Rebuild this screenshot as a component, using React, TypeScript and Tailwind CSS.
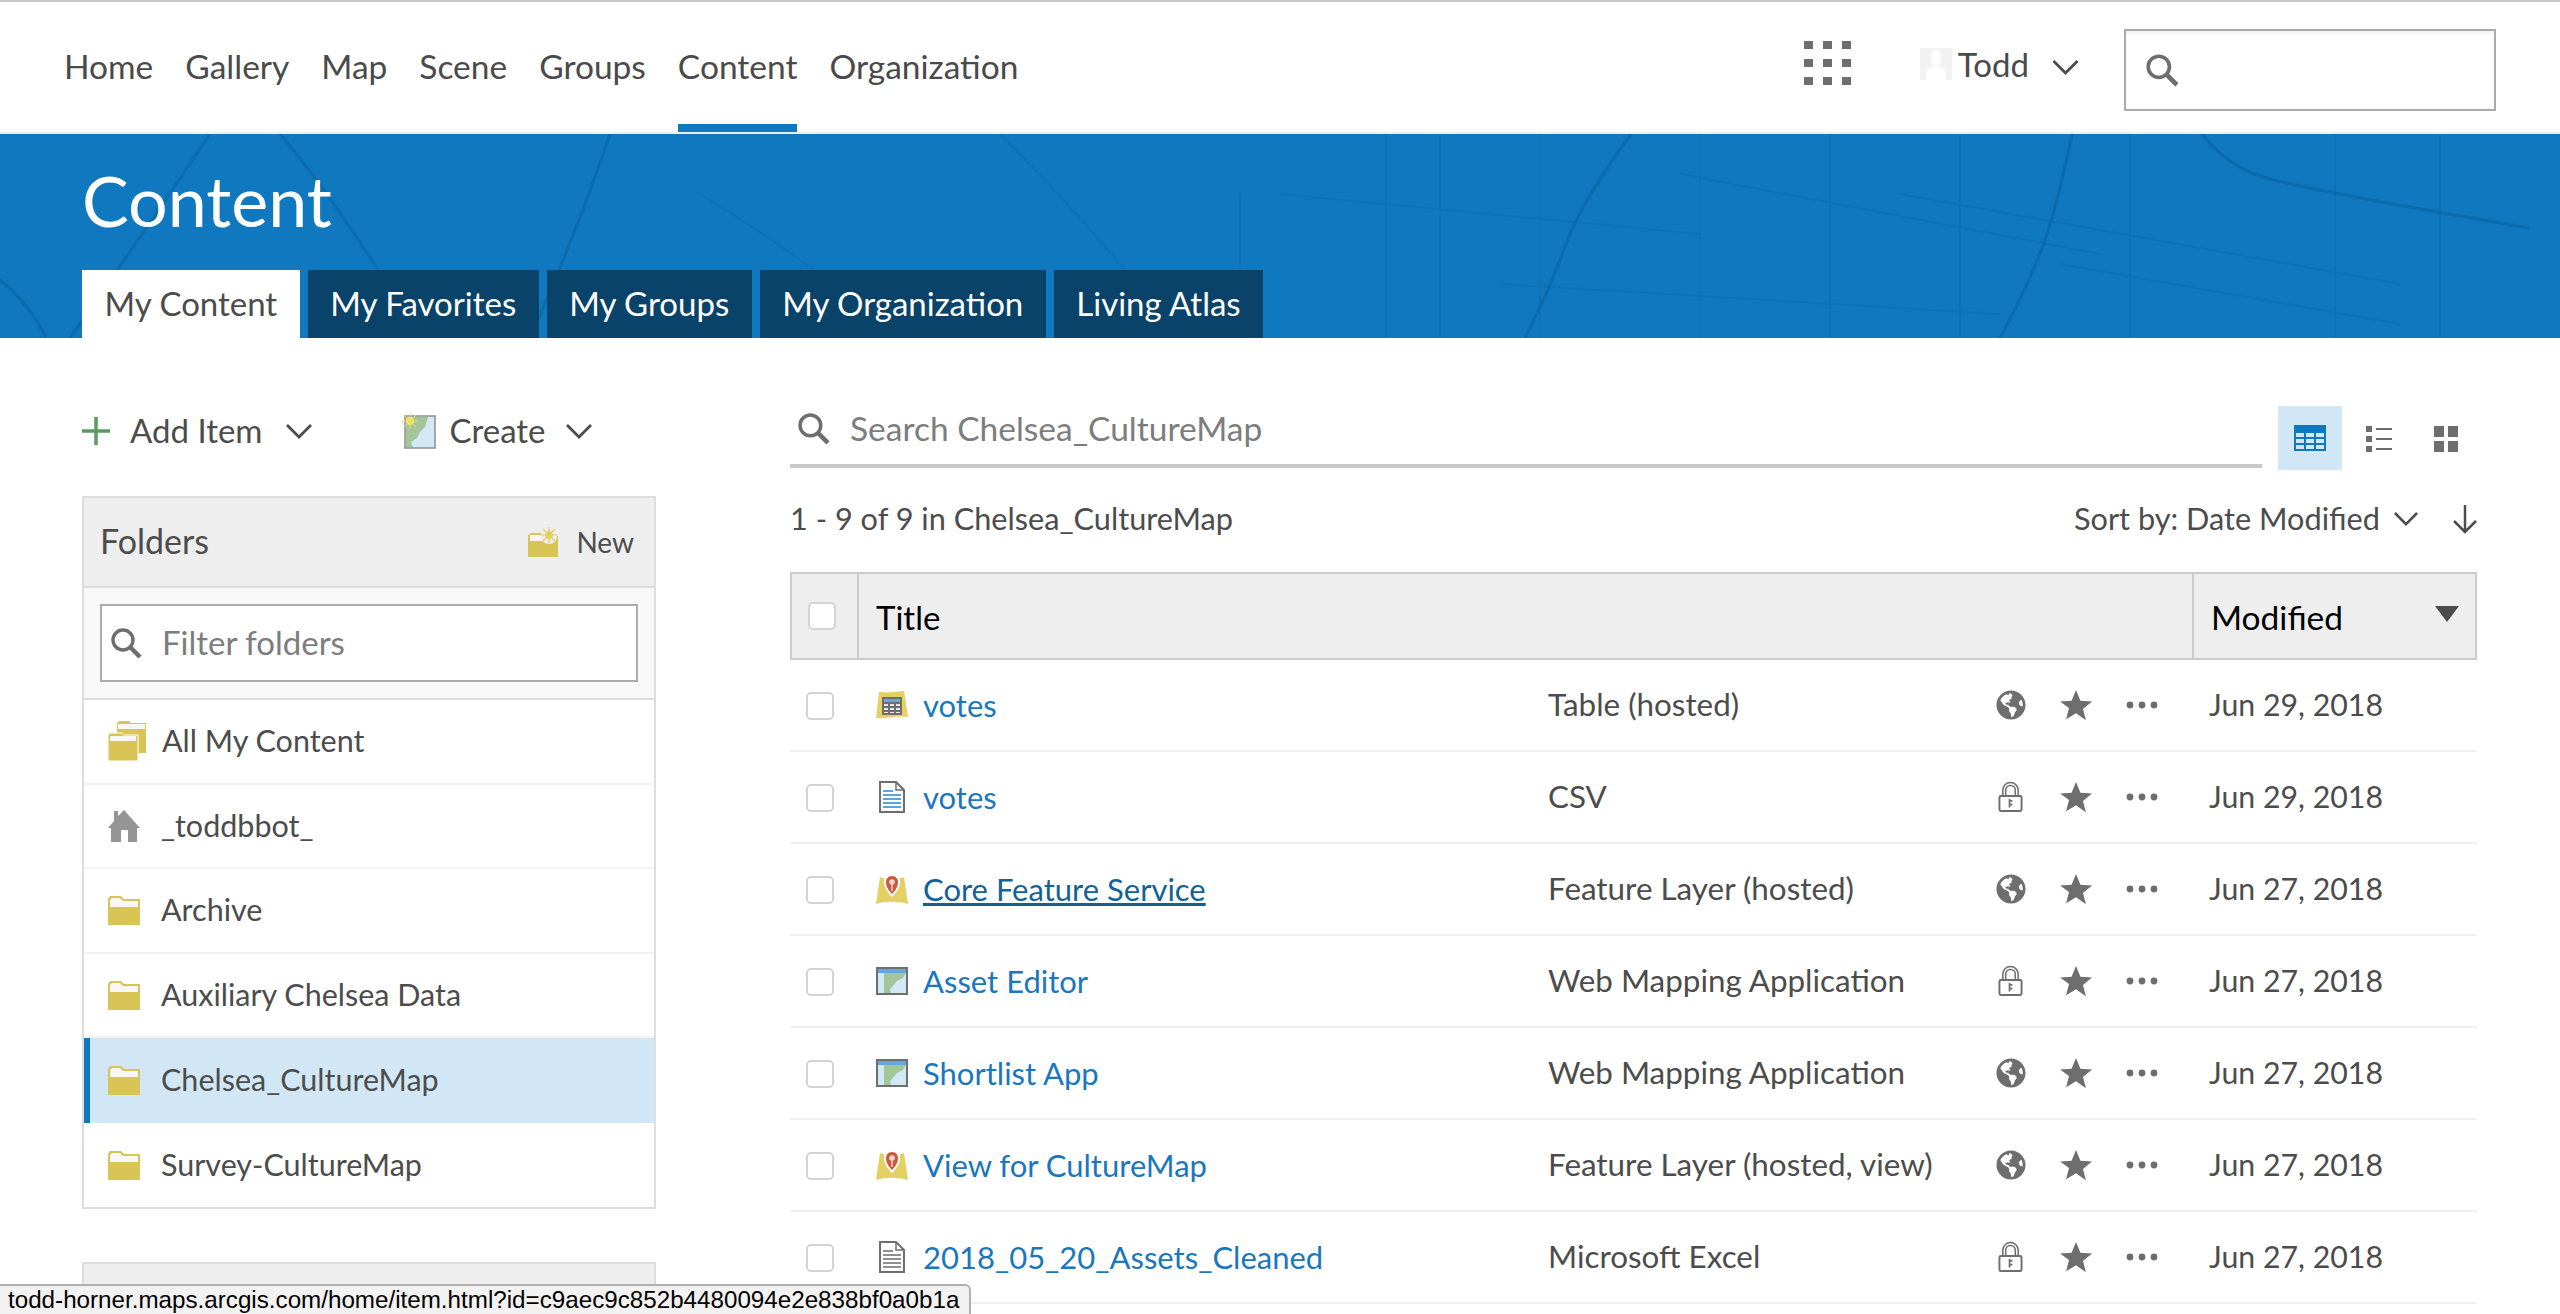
import { ReactNode } from 'react';
import { FaGlobeAmericas } from 'react-icons/fa';

const navLinks = ['Home', 'Gallery', 'Map', 'Scene', 'Groups', 'Content', 'Organization'];
const tabs = ['My Content', 'My Favorites', 'My Groups', 'My Organization', 'Living Atlas'];
const folders = ['Archive', 'Auxiliary Chelsea Data', 'Chelsea_CultureMap', 'Survey-CultureMap'];

type Row = {
  title: string;
  type: string;
  icon: 'table' | 'csv' | 'layer' | 'app' | 'excel';
  shared: boolean;
  date: string;
  hover?: boolean;
};

const rows: Row[] = [
  { title: 'votes', type: 'Table (hosted)', icon: 'table', shared: true, date: 'Jun 29, 2018' },
  { title: 'votes', type: 'CSV', icon: 'csv', shared: false, date: 'Jun 29, 2018' },
  { title: 'Core Feature Service', type: 'Feature Layer (hosted)', icon: 'layer', shared: true, date: 'Jun 27, 2018', hover: true },
  { title: 'Asset Editor', type: 'Web Mapping Application', icon: 'app', shared: false, date: 'Jun 27, 2018' },
  { title: 'Shortlist App', type: 'Web Mapping Application', icon: 'app', shared: true, date: 'Jun 27, 2018' },
  { title: 'View for CultureMap', type: 'Feature Layer (hosted, view)', icon: 'layer', shared: true, date: 'Jun 27, 2018' },
  { title: '2018_05_20_Assets_Cleaned', type: 'Microsoft Excel', icon: 'excel', shared: false, date: 'Jun 27, 2018' },
];

const SearchIcon = ({ className }: { className: string }) => (
  <svg viewBox="0 0 32 32" className={className} fill="none" stroke="#6e6e6e">
    <circle cx="13" cy="13" r="10" strokeWidth="3.4" />
    <path d="M20 20l10 10" strokeWidth="4.4" />
  </svg>
);

const Chevron = ({ className }: { className: string }) => (
  <svg viewBox="0 0 26 15" className={className} fill="none" stroke="#4c4c4c" strokeWidth="2.8">
    <path d="M1 1l12 12L25 1" />
  </svg>
);

const Folder = () => (
  <svg viewBox="0 0 32 30" className="w-8 h-[30px] shrink-0">
    <path d="M0 4l2-3h11l3 3h16v26H0z" fill="#d9c556" />
    <path d="M2 5l2-2h8l3 3h15v6H2z" fill="#f7f7f7" />
  </svg>
);

const FolderStack = () => (
  <svg viewBox="0 0 38 40" className="w-[38px] h-10 shrink-0">
    <path d="M9 2l2-2h10l2 2h15v30H9z" fill="#d9c556" />
    <path d="M10 3h27v5H10z" fill="#f7f7f7" />
    <path d="M0 14l2-2h12l2 2h14v26H0z" fill="#d9c556" stroke="#fff" strokeWidth="1" />
    <path d="M2 15h26v5H2z" fill="#f7f7f7" />
  </svg>
);

const NewFolder = () => (
  <svg viewBox="0 0 30 30" className="w-[30px] h-[30px]">
    <path d="M0 8l3-2h10l3 3h14v21H0z" fill="#d9c556" />
    <path d="M2 8h14l3 5h9v1H2z" fill="#f7f7f7" />
    <circle cx="21" cy="9" r="8" fill="#eee" />
    <circle cx="21" cy="8" r="4" fill="#e8d66c" />
    <path d="M21 0v16M13 8h16M15 2l12 12M27 2L15 14" stroke="#e0cd5c" strokeWidth="1.2" />
  </svg>
);

const HomeIcon = () => (
  <svg viewBox="0 0 32 32" className="w-8 h-8 shrink-0">
    <path d="M16 0l16 18h-3v14H20V20h-7v12H3V18H0L6 11V1h4v5z" fill="#959595" />
  </svg>
);

const MapThumb = () => (
  <svg viewBox="0 0 34 36" className="w-[34px] h-9 shrink-0">
    <path d="M3 3h30v32H3z" fill="#d3e8f5" stroke="#8f8f8f" strokeWidth="1.5" />
    <path d="M4 4h22l-3 10-5 5-3 6-6 4 2 5H4z" fill="#a2c59a" />
    <circle cx="8" cy="8" r="4" fill="#f5e67e" />
    <path d="M8 0v16M0 8h16M2 2l12 12M14 2L2 14" stroke="#ecd95d" strokeWidth="1" />
  </svg>
);

const TableThumb = () => (
  <svg viewBox="0 0 32 28" className="w-8 h-7">
    <path d="M3 1c8 1 14 0 25-1l4 26c-10-2-20 2-32 1z" fill="#e5d064" />
    <rect x="6" y="6" width="20" height="18" fill="#6e6e6e" />
    <path d="M8 8h16v3H8z" fill="#62a8dc" />
    <path d="M8 13h4v2H8zM14 13h4v2h-4zM20 13h4v2h-4zM8 17h4v2H8zM14 17h4v2h-4zM20 17h4v2h-4zM8 21h4v1H8zM14 21h4v1h-4zM20 21h4v1h-4z" fill="#e6e6e6" />
  </svg>
);

const LayerThumb = () => (
  <svg viewBox="0 0 32 31" className="w-8 h-[31px]">
    <path d="M4 3l6 2c4-1 8-1 12 0l6-2 4 27c-10-3-22-3-32 0z" fill="#e5d064" />
    <path d="M16 0c5 0 8 3 8 8 0 6-4 11-8 15-4-4-8-9-8-15 0-5 3-8 8-8z" fill="#fff" />
    <path d="M16 2c4 0 6 3 6 6 0 5-3 9-6 12-3-3-6-7-6-12 0-3 2-6 6-6z" fill="#c9593f" />
    <circle cx="16" cy="8" r="2.800" fill="#f5d6cc" />
    <path d="M16 10v7" stroke="#f5d6cc" strokeWidth="1.400" />
  </svg>
);

const AppThumb = () => (
  <svg viewBox="0 0 32 28" className="w-8 h-7">
    <rect x="1" y="1" width="30" height="26" fill="#d3e8f5" stroke="#6e6e6e" strokeWidth="2" />
    <path d="M2 2h28v4H2z" fill="#62a8dc" />
    <path d="M8 6h22l-3 5-6 3-4 5-3 3 1 4H8z" fill="#a2c59a" />
  </svg>
);

const DocThumb = ({ line }: { line: string }) => (
  <svg viewBox="0 0 26 32" className="w-[26px] h-8">
    <path d="M1 1h16l8 8v22H1z" fill="#fff" stroke="#6e6e6e" strokeWidth="2" />
    <path d="M17 1v8h8" fill="none" stroke="#6e6e6e" strokeWidth="1.5" />
    <path d="M4 9h10v2H4zM4 13h18v2H4zM4 17h18v2H4zM4 21h18v2H4zM4 25h18v2H4z" fill={line} />
  </svg>
);

const thumbs: Record<Row['icon'], ReactNode> = {
  table: <TableThumb />,
  csv: <DocThumb line="#5aa5dc" />,
  layer: <LayerThumb />,
  app: <AppThumb />,
  excel: <DocThumb line="#8f8f8f" />,
};

const LockIcon = () => (
  <svg viewBox="0 0 26 32" className="w-[25px] h-8" fill="none" stroke="#6e6e6e">
    <path d="M5 15V9a8 8 0 0116 0v6M8 15V9a5 5 0 0110 0v6" strokeWidth="1.6" />
    <rect x="1.5" y="15" width="23" height="15.5" rx="1.5" strokeWidth="2" />
    <path d="M12 18v9M12 20h3M12 24h3" strokeWidth="1.8" />
  </svg>
);

const StarIcon = () => (
  <svg viewBox="0 0 32 32" className="w-8 h-8">
    <path d="M16 1l4.4 10.8 11.6.8-9 7.4 2.9 11.3L16 24.2 6.100 30.300 9 19 0 12.600l11.600-.8z" fill="#6e6e6e" />
  </svg>
);

const Dots = () => (
  <svg viewBox="0 0 32 8" className="w-8 h-2">
    <circle cx="4" cy="4" r="3.400" fill="#6e6e6e" />
    <circle cx="16" cy="4" r="3.400" fill="#6e6e6e" />
    <circle cx="28" cy="4" r="3.400" fill="#6e6e6e" />
  </svg>
);

const Checkbox = () => (
  <span className="block w-7 h-7 rounded-[5px] border-2 border-[#d4d4d4] bg-white" />
);

const BannerLines = () => (
  <svg viewBox="0 0 2560 204" className="absolute inset-0 w-full h-full" fill="none" stroke="#0a5f9c">
    <g strokeWidth="3" opacity="0.5">
      <path d="M210 0Q150 90 70 204" />
      <path d="M0 146Q30 170 46 204" />
      <path d="M610 0Q580 90 530 204" />
      <path d="M280 0Q340 70 420 204" />
      <path d="M1631 0Q1580 70 1566 110T1525 204" />
      <path d="M2072 0Q2060 60 2047 100T2000 204" />
      <path d="M2202 0Q2225 30 2260 42T2530 94" />
    </g>
    <g strokeWidth="2" opacity="0.2">
      <path d="M1386 0V204M1440 0V204M1540 0V204M1700 0V204M1830 0V204M1960 0V204M2130 0V204M2335 0V204M2440 0V204" />
      <path d="M1280 60L1700 100M1680 40L2100 120M1900 60L2400 150M1500 150L2000 180M2060 130L2400 190" />
      <path d="M700 60Q800 120 900 204M1000 0Q1100 100 1180 204M1240 60V204" />
    </g>
  </svg>
);

export default function App() {
  return (
    <div className="relative h-[1314px] overflow-hidden bg-white font-['Lato','Liberation_Sans',sans-serif] text-[#4c4c4c]">
      <header className="flex h-[134px] items-center justify-between border-t-2 border-b-2 border-t-[#c8c8c8] border-b-[#eeeeee] pl-[64px] pr-[64px]">
        <nav className="flex h-full gap-[32px] text-[33.5px] text-[#4a4a4a]">
          {navLinks.map((link) => (
            <a
              key={link}
              className={`flex h-full items-center pt-[6px] border-b-[8px] ${link === 'Content' ? 'border-[#0f78bf]' : 'border-transparent'}`}
            >
              {link}
            </a>
          ))}
        </nav>
        <div className="flex items-center">
          <div className="mb-[8px] grid grid-cols-3 gap-x-[10px] gap-y-[10px]">
            {Array.from({ length: 9 }).map((_, i) => (
              <span key={i} className="w-[9px] h-[8px] bg-[#6e6e6e]" />
            ))}
          </div>
          <div className="ml-[69px] mb-[6px] w-8 h-8 bg-[#f2f2f2] flex items-center justify-center">
            <svg viewBox="0 0 32 32" className="w-8 h-8">
              <path d="M16 2c4 0 5 4 5 8s-2 7-3 8l8 5v9H6v-9l8-5c-1-1-3-4-3-8s1-8 5-8z" fill="#ffffff" />
            </svg>
          </div>
          <span className="ml-[6px] mb-[4px] text-[33px] text-[#4a4a4a]">Todd</span>
          <Chevron className="ml-[23px] w-[27px] h-[15px]" />
          <div className="ml-[45px] mt-[5px] flex h-[82px] w-[372px] items-center border-2 border-[#ababab] pl-[19px] shadow-[inset_0_2px_3px_rgba(0,0,0,0.06)]">
            <SearchIcon className="w-[34px] h-[34px]" />
          </div>
        </div>
      </header>

      <section className="relative h-[204px] bg-[#0f78bf] pl-[82px] overflow-hidden">
        <BannerLines />
        <div className="relative flex h-full flex-col justify-between">
          <h1 className="pt-[24px] text-[70px] leading-[84px] text-white">Content</h1>
          <div className="flex gap-[8px]">
            {tabs.map((tab, i) => (
              <a
                key={tab}
                className={`flex h-[68px] items-center px-[22.5px] text-[33px] ${i === 0 ? 'bg-white text-[#4c4c4c]' : 'bg-[#0a4369] text-white'}`}
              >
                {tab}
              </a>
            ))}
          </div>
        </div>
      </section>

      <main className="flex gap-[134px] pl-[82px] pr-[83px]">
        <aside className="w-[574px] shrink-0">
          <div className="flex h-[158px] items-center pt-[28px] text-[33px]">
            <svg viewBox="0 0 28 28" className="w-7 h-7">
              <path d="M14 0v28M0 14h28" stroke="#5a9a62" strokeWidth="3.500" />
            </svg>
            <span className="ml-[20px]">Add Item</span>
            <Chevron className="ml-[24px] w-[26px] h-[15px]" />
            <span className="ml-[90px]"><MapThumb /></span>
            <span className="ml-[13px]">Create</span>
            <Chevron className="ml-[20px] w-[26px] h-[15px]" />
          </div>
          <div className="border-2 border-[#dddddd]">
            <div className="flex h-[90px] items-center justify-between border-b-2 border-[#dddddd] bg-[#eeeeee] pl-[16px] pr-[20px]">
              <span className="pb-[4px] text-[34px]">Folders</span>
              <span className="flex items-center gap-[18px] text-[28px]">
                <NewFolder />
                New
              </span>
            </div>
            <div className="border-b-2 border-[#dddddd] bg-[#f8f8f8] px-[16px] py-[16px]">
              <div className="flex h-[78px] items-center border-2 border-[#ababab] bg-white pl-[8px]">
                <SearchIcon className="w-8 h-8" />
                <span className="ml-[20px] text-[33px] text-[#7d7d7d]">Filter folders</span>
              </div>
            </div>
            <div className="flex h-[84.5px] items-center gap-[16px] border-b-2 border-[#f2f2f2] pl-[24px] text-[30.5px]">
              <FolderStack />
              All My Content
            </div>
            <div className="flex h-[84.5px] items-center gap-[21px] border-b-2 border-[#f2f2f2] pl-[24px] text-[30.5px]">
              <HomeIcon />
              _toddbbot_
            </div>
            {folders.map((name) => (
              <div
                key={name}
                className={
                  name === 'Chelsea_CultureMap'
                    ? 'flex h-[84.5px] items-center gap-[21px] border-l-[6px] border-[#0f78bf] bg-[#d2e7f6] pl-[18px] text-[30.5px]'
                    : 'flex h-[84.5px] items-center gap-[21px] border-b-2 border-[#f2f2f2] pl-[24px] text-[30.5px] last:border-b-0'
                }
              >
                <Folder />
                {name}
              </div>
            ))}
          </div>
          <div className="mt-[53px] h-[60px] border-2 border-[#dddddd] bg-[#eeeeee]" />
        </aside>

        <div className="min-w-0 flex-1">
          <div className="flex items-start pt-[68px]">
            <div className="flex h-[62px] flex-1 items-center border-b-4 border-[#c8c8c8] pl-[7px] pb-[14px]">
              <SearchIcon className="w-[33px] h-[33px]" />
              <span className="ml-[20px] text-[33.5px] text-[#7d7d7d]">Search Chelsea_CultureMap</span>
            </div>
            <div className="ml-[16px] flex h-[64px] w-[64px] items-center justify-center bg-[#d2e7f6]">
              <svg viewBox="0 0 32 26" className="w-8 h-[26px]">
                <path d="M0 0h32v26H0z" fill="#0f78bf" />
                <path d="M2 8h8v4H2zM12 8h8v4h-8zM22 8h8v4h-8zM2 14h8v4H2zM12 14h8v4h-8zM22 14h8v4h-8zM2 20h8v4H2zM12 20h8v4h-8zM22 20h8v4h-8z" fill="#d2e7f6" />
              </svg>
            </div>
            <div className="ml-[24px] mt-[20px]">
              <svg viewBox="0 0 26 26" className="w-[26px] h-[26px]">
                <path d="M0 0h6v6H0zM0 10h6v6H0zM0 20h6v6H0zM10 2h16v2H10zM10 12h16v2H10zM10 22h16v2H10z" fill="#6e6e6e" />
              </svg>
            </div>
            <div className="ml-[42px] mr-[19px] mt-[20px] grid grid-cols-2 gap-[4px]">
              <span className="w-[10px] h-[11px] bg-[#6e6e6e]" />
              <span className="w-[10px] h-[11px] bg-[#6e6e6e]" />
              <span className="w-[10px] h-[11px] bg-[#6e6e6e]" />
              <span className="w-[10px] h-[11px] bg-[#6e6e6e]" />
            </div>
          </div>

          <div className="flex h-[102px] items-center justify-between pb-[3px] text-[30.7px]">
            <span>1 - 9 of 9 in Chelsea_CultureMap</span>
            <span className="flex items-center">
              Sort by: Date Modified
              <Chevron className="ml-[14px] w-[24px] h-[14px]" />
              <svg viewBox="0 0 24 30" className="ml-[35px] w-6 h-[30px]" fill="none" stroke="#4c4c4c" strokeWidth="2.500">
                <path d="M12 1v27M1 17l11 11 11-11" />
              </svg>
            </span>
          </div>

          <div className="flex h-[88px] items-center border-2 border-[#cccccc] bg-[#eeeeee] text-[33px] text-black">
            <div className="flex h-full w-[67px] items-center border-r-2 border-[#cccccc] pl-[16px]">
              <Checkbox />
            </div>
            <div className="flex-1 pl-[17px] pt-[3px]">Title</div>
            <div className="relative flex h-full w-[283px] items-center border-l-2 border-[#cccccc] pl-[17px] pt-[3px] text-[33.5px]">
              Modified
              <svg viewBox="0 0 24 16" className="absolute right-[16px] top-[32px] w-6 h-4">
                <path d="M0 0h24L12 16z" fill="#4c4c4c" />
              </svg>
            </div>
          </div>

          {rows.map((row, i) => (
            <div key={i} className="flex h-[92px] items-center border-b-2 border-[#f0f0f0] text-[31.4px]">
              <div className="ml-[16px] w-[28px] pt-[2px]">
                <Checkbox />
              </div>
              <div className="ml-[42px] flex w-[32px] justify-center">{thumbs[row.icon]}</div>
              <a
                className={`ml-[15px] w-[625px] text-[31px] ${row.hover ? 'underline text-[#136296]' : 'text-[#1a77bd]'}`}
              >
                {row.title}
              </a>
              <div className="w-[430px]">{row.type}</div>
              <div className="flex w-[65px] justify-center">{row.shared ? <FaGlobeAmericas className="w-[30px] h-[30px] text-[#6e6e6e]" /> : <LockIcon />}</div>
              <div className="flex w-[65px] justify-center"><StarIcon /></div>
              <div className="flex w-[68px] justify-center"><Dots /></div>
              <div className="ml-[33px] whitespace-nowrap text-[30.3px]">{row.date}</div>
            </div>
          ))}
        </div>
      </main>

      <div className="absolute bottom-0 left-0 flex h-[30px] w-[971px] items-center rounded-tr-[6px] border-t-2 border-r-2 border-[#b0b0b0] bg-[#f2f2f2] pl-[8px] font-['Liberation_Sans',sans-serif] text-[24.2px] text-black">
        todd-horner.maps.arcgis.com/home/item.html?id=c9aec9c852b4480094e2e838bf0a0b1a
      </div>
    </div>
  );
}
